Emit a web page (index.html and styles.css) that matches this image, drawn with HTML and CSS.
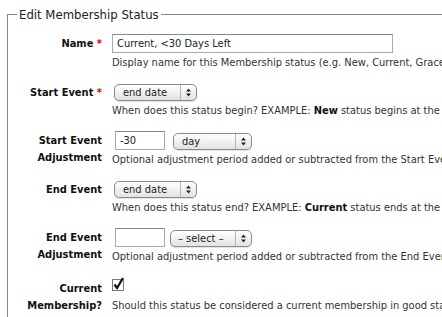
FILE: index.html
```html
<!DOCTYPE html>
<html lang="en">
<head>
    <meta charset="UTF-8">
    <title>Edit Membership Status</title>
    <link rel="stylesheet" href="styles.css">
</head>
<body>
    <fieldset class="panel">
        <legend>Edit Membership Status</legend>

        <div class="row">
            <label class="label">Name <span class="req">*</span></label>
            <div class="field">
                <input class="text text-wide" type="text" value="Current, &lt;30 Days Left">
                <div class="help">Display name for this Membership status (e.g. New, Current, Grace, Expired...).</div>
            </div>
        </div>

        <div class="row">
            <label class="label">Start Event <span class="req">*</span></label>
            <div class="field">
                <span class="select select-event">
                    <span class="select-text">end date</span>
                    <span class="select-arrows"><svg width="7" height="9" viewBox="0 0 7 9"><path d="M3.5 0.5 L6 3.5 H1 Z M3.5 8.5 L6 5.5 H1 Z" fill="#222"/></svg></span>
                </span>
                <div class="help">When does this status begin? EXAMPLE: <b>New</b> status begins at the membership start date.</div>
            </div>
        </div>

        <div class="row">
            <label class="label">Start Event<br>Adjustment</label>
            <div class="field">
                <div class="inline">
                    <input class="text text-small" type="text" value="-30">
                    <span class="select select-unit">
                        <span class="select-text">day</span>
                        <span class="select-arrows"><svg width="7" height="9" viewBox="0 0 7 9"><path d="M3.5 0.5 L6 3.5 H1 Z M3.5 8.5 L6 5.5 H1 Z" fill="#222"/></svg></span>
                    </span>
                </div>
                <div class="help">Optional adjustment period added or subtracted from the Start Event date.</div>
            </div>
        </div>

        <div class="row">
            <label class="label">End Event</label>
            <div class="field">
                <span class="select select-event">
                    <span class="select-text">end date</span>
                    <span class="select-arrows"><svg width="7" height="9" viewBox="0 0 7 9"><path d="M3.5 0.5 L6 3.5 H1 Z M3.5 8.5 L6 5.5 H1 Z" fill="#222"/></svg></span>
                </span>
                <div class="help">When does this status end? EXAMPLE: <b>Current</b> status ends at the membership end date.</div>
            </div>
        </div>

        <div class="row">
            <label class="label">End Event<br>Adjustment</label>
            <div class="field">
                <div class="inline">
                    <input class="text text-small" type="text" value="">
                    <span class="select select-none">
                        <span class="select-text">&ndash; select &ndash;</span>
                        <span class="select-arrows"><svg width="7" height="9" viewBox="0 0 7 9"><path d="M3.5 0.5 L6 3.5 H1 Z M3.5 8.5 L6 5.5 H1 Z" fill="#222"/></svg></span>
                    </span>
                </div>
                <div class="help">Optional adjustment period added or subtracted from the End Event date.</div>
            </div>
        </div>

        <div class="row row-check">
            <label class="label">Current<br>Membership?</label>
            <div class="field">
                <span class="check">
                    <svg width="13" height="14" viewBox="0 0 13 14">
                        <rect x="0.5" y="2.5" width="11" height="11" fill="#fff" stroke="#777"/>
                        <path d="M2.5 7.5 L5 11 L11 1" fill="none" stroke="#111" stroke-width="2.2"/>
                    </svg>
                </span>
                <div class="help">Should this status be considered a current membership in good standing?</div>
            </div>
        </div>
    </fieldset>
</body>
</html>
```

FILE: styles.css
```css
body {
    margin: 0;
    padding: 7px;
    font-family: "DejaVu Sans", Verdana, sans-serif;
    font-stretch: condensed;
    font-size: 11px;
    color: #222;
    background: #fff;
    overflow: hidden;
}

.panel {
    width: 620px;
    margin: 0;
    padding: 12px 0 0 0;
    border: 1px solid #888;
    border-right: none;
    border-bottom: none;
}

.panel legend {
    padding: 0 2px;
    margin-left: 9px;
    font-size: 13px;
    color: #222;
}

.row {
    display: grid;
    grid-template-columns: 94px 1fr;
    column-gap: 10px;
    margin-bottom: 13px;
}

.label {
    text-align: right;
    font-weight: bold;
    line-height: 17px;
    padding-top: 1px;
    color: #111;
}

.row-check .label {
    padding-top: 3px;
}

.req {
    color: #d00;
}

.field {
    display: flex;
    flex-direction: column;
    align-items: flex-start;
}

.help {
    margin-top: 3px;
    line-height: 14px;
    white-space: nowrap;
    color: #333;
}

.help b {
    color: #111;
}

.inline {
    display: flex;
    align-items: center;
}

.text {
    box-sizing: border-box;
    height: 19px;
    margin: 0;
    padding: 1px 4px;
    border: 1px solid #aaa;
    border-top-color: #888;
    font: inherit;
    color: #222;
}

.text-wide {
    width: 281px;
}

.text-small {
    width: 50px;
    margin-left: 3px;
}

.select {
    box-sizing: border-box;
    display: inline-flex;
    align-items: center;
    height: 17px;
    margin: 1px 0 0 2px;
    border: 1px solid #8a8a8a;
    border-radius: 5px;
    background: linear-gradient(#fff, #f1f1f1 50%, #e2e2e2);
    box-shadow: 0 1px 1px rgba(0,0,0,0.12);
}

.select-text {
    flex: 1;
    padding-left: 8px;
    line-height: 15px;
    color: #222;
}

.select-arrows {
    display: flex;
    align-items: center;
    justify-content: center;
    width: 15px;
    height: 15px;
    border-left: 1px solid #b5b5b5;
}

.select-event {
    width: 83px;
}

.select-unit {
    width: 79px;
    margin-left: 8px;
}

.select-none {
    width: 82px;
    margin-left: 5px;
}

.select-none .select-text {
    padding-left: 7px;
}

.check {
    display: block;
    height: 15px;
    margin: 0 0 4px 0;
}
```
